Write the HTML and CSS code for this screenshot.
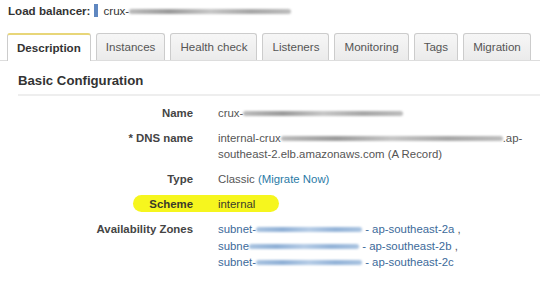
FILE: index.html
```html
<html>

<head>
    <meta name="viewport" content="width=device-width, initial-scale=1">
    <title>Load balancer</title>
    <link rel="stylesheet" href="styles.css">
</head>

<body>
    <div class="header">
        <span class="header-label">Load balancer:</span>
        <span class="marker"></span>
        <span class="header-name">crux-<span class="smudge smudge-header"></span></span>
    </div>

    <div class="tabs">
        <div class="tab active">Description</div>
        <div class="tab">Instances</div>
        <div class="tab">Health check</div>
        <div class="tab">Listeners</div>
        <div class="tab">Monitoring</div>
        <div class="tab">Tags</div>
        <div class="tab">Migration</div>
    </div>

    <div class="panel">
        <h2>Basic Configuration</h2>

        <div class="row">
            <div class="label">Name</div>
            <div class="value">crux-<span class="smudge smudge-name"></span></div>
        </div>
        <div class="row">
            <div class="label">* DNS name</div>
            <div class="value">internal-crux<span class="smudge smudge-dns"></span>.ap-<br>southeast-2.elb.amazonaws.com (A Record)</div>
        </div>
        <div class="row">
            <div class="label">Type</div>
            <div class="value">Classic <a class="link" href="#">(Migrate Now)</a></div>
        </div>
        <div class="row highlighted">
            <div class="label">Scheme</div>
            <div class="value">internal</div>
        </div>
        <div class="row">
            <div class="label">Availability Zones</div>
            <div class="value zones">
                <div><a class="subnet" href="#">subnet-<span class="smudge smudge-blue s1"></span> - ap-southeast-2a</a> ,</div>
                <div><a class="subnet" href="#">subne<span class="smudge smudge-blue s2"></span> - ap-southeast-2b</a> ,</div>
                <div><a class="subnet" href="#">subnet-<span class="smudge smudge-blue s3"></span> - ap-southeast-2c</a></div>
            </div>
        </div>
    </div>
</body>

</html>
```

FILE: styles.css
```css
body {
    margin: 0;
    background-color: white;
    font-family: "Liberation Sans", Arial, sans-serif;
    font-size: 11.4px;
    color: #444;
}

.header {
    display: flex;
    align-items: center;
    height: 20px;
    padding: 0 8px;
    font-size: 11.6px;
}

.header-label {
    font-weight: bold;
    color: #333;
}

.marker {
    display: inline-block;
    width: 4px;
    height: 13px;
    margin: 0 5px 0 4px;
    background: #5f87c0;
}

.header-name {
    color: #333;
}

/* blurred out bits of the screenshot */
.smudge {
    display: inline-block;
    height: 5px;
    vertical-align: middle;
    border-radius: 3px;
    background: linear-gradient(to right, #bbb, #9a9a9a, #c6c6c6, #a6a6a6, #bdbdbd);
    filter: blur(1.2px);
}

.smudge-header {
    width: 162px;
}

.smudge-name {
    width: 160px;
}

.smudge-dns {
    width: 222px;
}

.smudge-blue {
    background: linear-gradient(to right, #a9c3e0, #8fb0d6, #b5cce6, #93b3d8, #aac4e1);
}

.s1 {
    width: 106px;
}

.s2 {
    width: 110px;
}

.s3 {
    width: 106px;
}

.tabs {
    display: flex;
    gap: 5px;
    margin-top: 13px;
    padding-left: 7px;
    border-bottom: 1px solid #ddd;
}

.tab {
    flex-shrink: 0;
    white-space: nowrap;
    height: 26px;
    line-height: 26px;
    padding: 0 9px;
    border: 1px solid #ccc;
    border-bottom: none;
    border-radius: 3px 3px 0 0;
    background: linear-gradient(to bottom, #f6f6f6, #ebebeb);
    color: #555;
    font-size: 11.6px;
}

.tab.active {
    padding: 0 9px;
    border-top: 2px solid #e8d679;
    height: 26px;
    margin-bottom: -1px;
    background: white;
    color: #333;
    font-weight: bold;
}

.panel {
    padding: 0 0 0 18px;
}

h2 {
    margin: 12px 0 0 0;
    padding-bottom: 6px;
    border-bottom: 2px solid #eee;
    font-size: 13.2px;
    color: #333;
}

.row {
    display: grid;
    grid-template-columns: 175px 1fr;
    column-gap: 25px;
    line-height: 16px;
    margin-top: 9px;
    position: relative;
}

.label {
    text-align: right;
    font-weight: bold;
    color: #444;
}

.value {
    color: #555;
}

.highlighted::before {
    content: "";
    position: absolute;
    left: 115px;
    top: -1px;
    width: 146px;
    height: 17px;
    border-radius: 9px;
    background: #f6f61e;
    z-index: -1;
}

.highlighted .label,
.highlighted .value {
    color: #3a3a2a;
}

.link {
    color: #2a7aa6;
    text-decoration: none;
}

.subnet {
    color: #3c6a9a;
    text-decoration: none;
}

.zones div {
    line-height: 16.5px;
}
```
